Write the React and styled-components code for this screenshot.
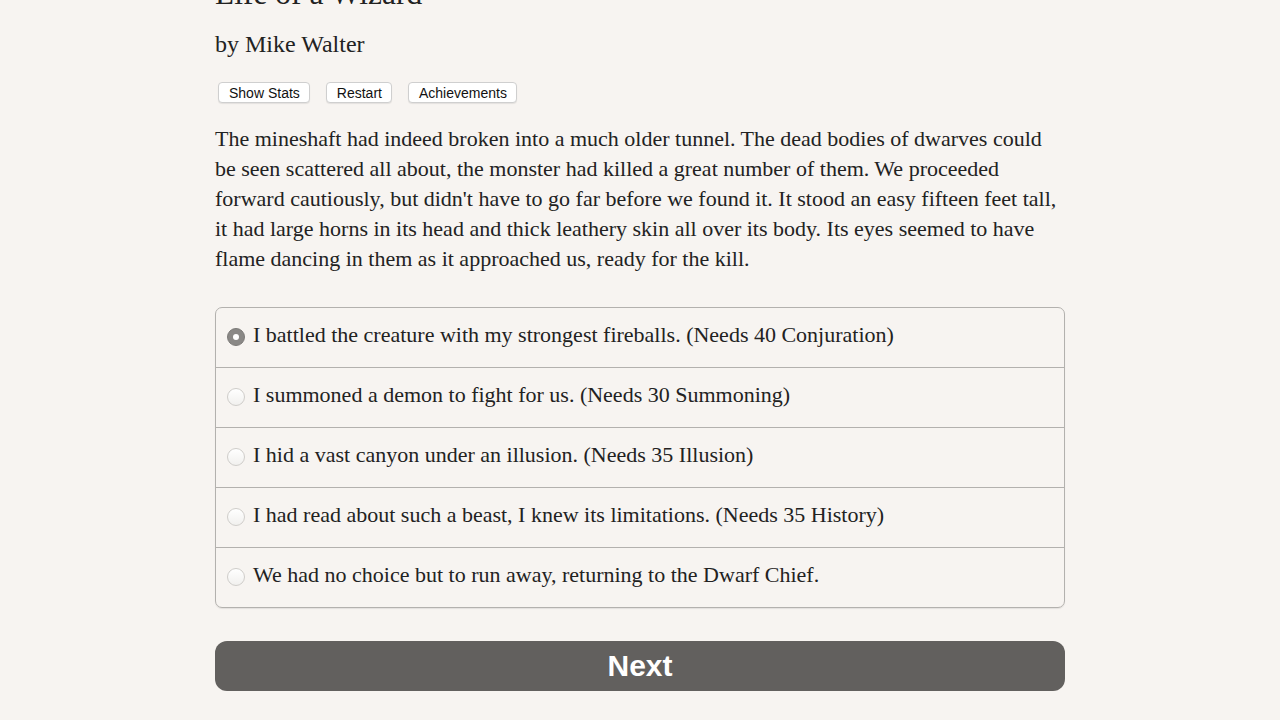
import React, { useState } from 'react';
import styled, { createGlobalStyle } from 'styled-components';

const GlobalStyle = createGlobalStyle`
  html, body {
    margin: 0;
    padding: 0;
    background-color: #f7f4f1;
  }
  body {
    font-family: "Liberation Serif", "Times New Roman", serif;
    color: #222;
    overflow: hidden;
  }
`;

const storyLines = [
  'The mineshaft had indeed broken into a much older tunnel. The dead bodies of dwarves could',
  'be seen scattered all about, the monster had killed a great number of them. We proceeded',
  "forward cautiously, but didn't have to go far before we found it. It stood an easy fifteen feet tall,",
  'it had large horns in its head and thick leathery skin all over its body. Its eyes seemed to have',
  'flame dancing in them as it approached us, ready for the kill.',
];

const options = [
  'I battled the creature with my strongest fireballs. (Needs 40 Conjuration)',
  'I summoned a demon to fight for us. (Needs 30 Summoning)',
  'I hid a vast canyon under an illusion. (Needs 35 Illusion)',
  'I had read about such a beast, I knew its limitations. (Needs 35 History)',
  'We had no choice but to run away, returning to the Dwarf Chief.',
];

function App() {
  const [choice, setChoice] = useState(0);

  return (
    <>
      <GlobalStyle />
      <Main>
        <Title>Life of a Wizard</Title>
        <Author>by Mike Walter</Author>
        <ButtonBar>
          <SmallButton>Show Stats</SmallButton>
          <SmallButton>Restart</SmallButton>
          <SmallButton>Achievements</SmallButton>
        </ButtonBar>
        <Story>
          {storyLines.map((line, i) => (
            <StoryLine key={i}>{line}</StoryLine>
          ))}
        </Story>
        <ChoiceList>
          {options.map((text, i) => (
            <ChoiceRow key={i} onClick={() => setChoice(i)}>
              <Radio $checked={choice === i} />
              <ChoiceText>{text}</ChoiceText>
            </ChoiceRow>
          ))}
        </ChoiceList>
        <NextButton>Next</NextButton>
      </Main>
    </>
  );
}

// page is scrolled a little, so the title sits partly above the top edge
const Main = styled.div`
  width: 850px;
  margin: -24px auto 0;
`;

const Title = styled.h1`
  font-size: 31.5px;
  font-weight: normal;
  margin: 0;
  line-height: 36px;
`;

const Author = styled.h2`
  font-size: 24px;
  font-weight: normal;
  margin: 18px 0 0;
  line-height: 28px;
`;

const ButtonBar = styled.div`
  display: flex;
  gap: 16px;
  margin: 24px 0 0 3px;
`;

const SmallButton = styled.button`
  font-family: "Liberation Sans", Arial, sans-serif;
  font-size: 14px;
  color: #111;
  background: #fff;
  border: 1px solid #cfcfcf;
  border-radius: 4px;
  height: 21px;
  padding: 0 9px 0 10px;
  box-shadow: 0 1px 1px rgba(0, 0, 0, 0.08);
  cursor: pointer;
`;

const Story = styled.p`
  font-size: 22px;
  line-height: 30px;
  margin: 21px 0 0;
`;

const StoryLine = styled.span`
  display: block;
  white-space: nowrap;
`;

const ChoiceList = styled.div`
  margin-top: 33px;
  border: 1px solid #b3b1ae;
  border-radius: 7px;
  box-shadow: 0 1px 1px rgba(0, 0, 0, 0.08);
  overflow: hidden;
`;

const ChoiceRow = styled.label`
  display: flex;
  align-items: center;
  box-sizing: border-box;
  height: 60px;
  padding: 0 0 5px 11px;
  border-top: 1px solid #b3b1ae;
  cursor: pointer;

  &:first-child {
    border-top: none;
    height: 59px;
  }
`;

const Radio = styled.span`
  width: 18px;
  height: 18px;
  border-radius: 50%;
  box-sizing: border-box;
  flex-shrink: 0;
  margin-right: 8px;
  margin-top: 4px;
  background: ${p => (p.$checked ? '#8a8886' : 'linear-gradient(#fff, #f1f0ee)')};
  border: 1px solid ${p => (p.$checked ? '#7c7a78' : '#cfcdca')};
  display: flex;
  align-items: center;
  justify-content: center;

  &::after {
    content: '';
    width: 6px;
    height: 6px;
    border-radius: 50%;
    background: #fff;
    display: ${p => (p.$checked ? 'block' : 'none')};
  }
`;

const ChoiceText = styled.span`
  font-size: 22px;
  line-height: 30px;
`;

const NextButton = styled.button`
  display: block;
  width: 100%;
  height: 50px;
  margin-top: 33px;
  border: none;
  border-radius: 12px;
  background: #62605e;
  color: #fff;
  font-family: "Liberation Sans", Arial, sans-serif;
  font-weight: bold;
  font-size: 30px;
  cursor: pointer;
`;

export default App;
